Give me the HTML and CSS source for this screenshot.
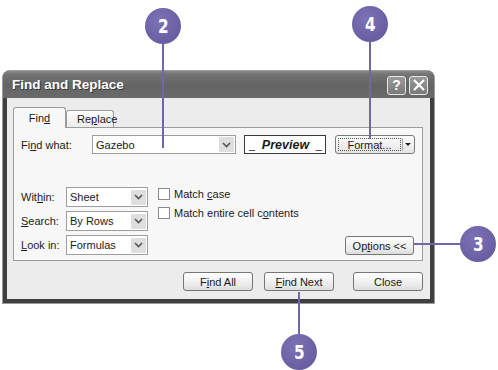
FILE: index.html
```html
<!DOCTYPE html>
<html>
<head>
<meta charset="utf-8">
<link rel="stylesheet" href="styles.css">
</head>
<body>
<div class="stage">
  <div class="dialog">
    <div class="titlebar">
      <span class="title">Find and Replace</span>
      <div class="tbtns">
        <span class="tbtn">?</span>
        <span class="tbtn">
          <svg width="14" height="14" viewBox="0 0 14 14"><path d="M2 2 L12 12 M12 2 L2 12" stroke="#fff" stroke-width="2.2"/></svg>
        </span>
      </div>
    </div>
    <div class="body">
      <div class="tabs">
        <span class="tab active">Fin<u>d</u></span>
        <span class="tab">Re<u>p</u>lace</span>
      </div>
      <div class="panel">
        <div class="row1">
          <span class="lbl lbl-what">Fi<u>n</u>d what:</span>
          <div class="combo combo-what"><span class="val">Gazebo</span><span class="arrow"><svg width="9" height="6" viewBox="0 0 9 6"><path d="M1 1 L4.5 4.5 L8 1" fill="none" stroke="#555" stroke-width="1.6"/></svg></span></div>
          <div class="preview"><span class="us">_</span><span class="pv">Preview</span><span class="us">_</span></div>
          <div class="fmt"><span class="fmt-main"><span class="focus">Format...</span></span><span class="fmt-arrow"></span></div>
        </div>
        <div class="opts">
          <div class="opt-grid">
            <span class="lbl">Wit<u>h</u>in:</span>
            <div class="combo combo-sm"><span class="val">Sheet</span><span class="arrow"><svg width="9" height="6" viewBox="0 0 9 6"><path d="M1 1 L4.5 4.5 L8 1" fill="none" stroke="#555" stroke-width="1.6"/></svg></span></div>
            <span class="lbl"><u>S</u>earch:</span>
            <div class="combo combo-sm"><span class="val">By Rows</span><span class="arrow"><svg width="9" height="6" viewBox="0 0 9 6"><path d="M1 1 L4.5 4.5 L8 1" fill="none" stroke="#555" stroke-width="1.6"/></svg></span></div>
            <span class="lbl"><u>L</u>ook in:</span>
            <div class="combo combo-sm"><span class="val">Formulas</span><span class="arrow"><svg width="9" height="6" viewBox="0 0 9 6"><path d="M1 1 L4.5 4.5 L8 1" fill="none" stroke="#555" stroke-width="1.6"/></svg></span></div>
          </div>
          <div class="checks">
            <label class="chk"><span class="box"></span><span>Match <u>c</u>ase</span></label>
            <label class="chk"><span class="box"></span><span>Match entire cell c<u>o</u>ntents</span></label>
          </div>
          <div class="opt-btn-wrap">
            <span class="btn btn-options">Op<u>t</u>ions &lt;&lt;</span>
          </div>
        </div>
      </div>
      <div class="actions">
        <span class="btn">F<u>i</u>nd All</span>
        <span class="btn"><u>F</u>ind Next</span>
        <span class="btn btn-close">Close</span>
      </div>
    </div>
  </div>

  <div class="callout c2"><span>2</span></div>
  <div class="line l2"></div>
  <div class="callout c4"><span>4</span></div>
  <div class="line l4"></div>
  <div class="callout c3"><span>3</span></div>
  <div class="line l3"></div>
  <div class="callout c5"><span>5</span></div>
  <div class="line l5"></div>
</div>
</body>
</html>
```

FILE: styles.css
```css
* { box-sizing: border-box; }
html, body { margin: 0; padding: 0; background: #fff; }
body { width: 498px; height: 370px; overflow: hidden; font-family: "Liberation Sans", Arial, sans-serif; font-size: 11px; color: #1a1a1a; }
u { text-decoration: underline; text-underline-offset: 1px; }

.stage { position: relative; width: 498px; height: 370px; padding: 71px 0 0 3px; }

.dialog {
  width: 431px; height: 232px;
  background: #3f3f3f;
  border-radius: 7px 7px 0 0;
  padding: 0 4px 4px 4px;
  display: flex; flex-direction: column;
  box-shadow: 0 0 0 1px #9a9a9a;
}
.titlebar {
  height: 27px; margin: 0 -4px;
  border-radius: 7px 7px 0 0;
  background: linear-gradient(#8c8c8c 0, #747474 3px, #646464 14px, #6a6a6a 27px);
  display: flex; align-items: center; justify-content: space-between;
  padding: 0 6px 0 9px;
}
.title { color: #fff; font-weight: bold; font-size: 13.5px; font-family: "Liberation Sans", sans-serif; text-shadow: 1px 1px 0 #3a3a3a; }
.tbtns { display: flex; gap: 3px; margin-top: 1px; }
.tbtn {
  width: 19px; height: 19px; border: 1px solid #e6e6e6; border-radius: 3px;
  background: linear-gradient(#9a9a9a, #7a7a7a);
  color: #fff; font-weight: bold; font-size: 14px; display: flex; align-items: center; justify-content: center;
  font-family: "Liberation Sans", sans-serif;
}

.body {
  flex: 1; background: #ececec;
  padding: 9px 7px 0 6px;
  display: flex; flex-direction: column;
}
.tabs { display: flex; align-items: flex-end; height: 20px; }
.tab {
  height: 17px; padding: 0 10px; border: 1px solid #9c9c9c; border-bottom: none;
  background: linear-gradient(#fdfdfd, #ececec); border-radius: 3px 3px 0 0;
  display: flex; align-items: center; font-size: 11px;
}
.tab.active { height: 21px; width: 53px; justify-content: center; background: #f7f7f7; position: relative; top: 1px; z-index: 1; }
.tab:nth-child(2) { width: 48px; }

.panel {
  height: 134px; background: #f7f7f7; border: 1px solid #9c9c9c;
  padding: 7px 0 0 7px;
}
.row1 { display: flex; align-items: center; height: 19px; }
.lbl-what { width: 71px; }
.combo {
  height: 19px; background: #fff; border: 1px solid #9e9e9e;
  display: flex; align-items: center; justify-content: space-between;
  padding: 1px 1px 1px 3px;
}
.combo .val { font-size: 11px; }
.combo .arrow {
  width: 15px; height: 15px; background: #dedede; border-radius: 1px;
  display: flex; align-items: center; justify-content: center;
}
.combo-what { width: 144px; }
.preview {
  width: 82px; height: 19px; margin-left: 8px; border: 1px solid #3a3a3a; background: #fff;
  display: flex; align-items: flex-end; justify-content: space-between; padding: 0 3px 0 4px;
}
.preview .us { font-size: 11px; line-height: 11px; padding-bottom: 2px; }
.preview .pv { font-weight: bold; font-style: italic; font-size: 12.5px; align-self: center; }
.fmt {
  margin-left: 9px; width: 80px; height: 19px;
  border: 1px solid #7a7a7a; border-radius: 3px;
  background: linear-gradient(#fdfdfd, #e4e4e4);
  display: flex; padding: 2px;
}
.fmt-main { flex: 1; display: flex; }
.focus { flex: 1; border: 1px dotted #555; display: flex; align-items: center; justify-content: center; font-size: 11px; }
.fmt-arrow { width: 10px; border-left: 1px solid #aaa; display: flex; align-items: center; justify-content: center; margin-left: 1px; }
.fmt-arrow::after { content: ""; border-left: 3px solid transparent; border-right: 3px solid transparent; border-top: 3px solid #222; }

.opts { display: flex; margin-top: 33px; }
.opt-grid { display: grid; grid-template-columns: 45px 82px; row-gap: 4px; align-items: center; }
.combo-sm { width: 82px; height: 20px; }
.checks { display: flex; flex-direction: column; gap: 7px; margin-left: 10px; padding-top: 1px; }
.chk { display: flex; align-items: center; gap: 4px; height: 12px; }
.box { width: 12px; height: 12px; border: 1px solid #8a8a8a; background: #fff; }
.opt-btn-wrap { flex: 1; display: flex; justify-content: flex-end; align-items: flex-end; padding-right: 8px; }

.btn {
  width: 70px; height: 19px; border: 1px solid #767676; border-radius: 3px;
  background: linear-gradient(#fefefe, #ebebeb 70%, #dcdcdc);
  display: flex; align-items: center; justify-content: center; font-size: 11px;
}
.btn-options { width: 69px; }
.actions { display: flex; justify-content: flex-end; gap: 11px; margin-top: 11px; }
.btn-close { margin-left: 8px; }

.callout {
  position: absolute; width: 36px; height: 36px; border-radius: 50%;
  background: radial-gradient(circle at 40% 35%, #7d72b6, #6a5ea3 70%);
  display: flex; align-items: center; justify-content: center;
  z-index: 3;
}
.callout span { color: #fff; font-weight: bold; font-size: 20px; font-family: "Liberation Sans Narrow", "DejaVu Sans Condensed", sans-serif; transform: scaleX(0.85); }
.line { position: absolute; background: #7166aa; z-index: 2; }
.c2 { left: 145px; top: 8px; }
.l2 { left: 162px; top: 42px; width: 2px; height: 106px; }
.c4 { left: 352px; top: 6px; }
.l4 { left: 369px; top: 40px; width: 2px; height: 99px; }
.c3 { left: 460px; top: 226px; }
.l3 { left: 414px; top: 243px; width: 48px; height: 2px; }
.c5 { left: 281px; top: 334px; }
.l5 { left: 298px; top: 292px; width: 2px; height: 44px; }
```
